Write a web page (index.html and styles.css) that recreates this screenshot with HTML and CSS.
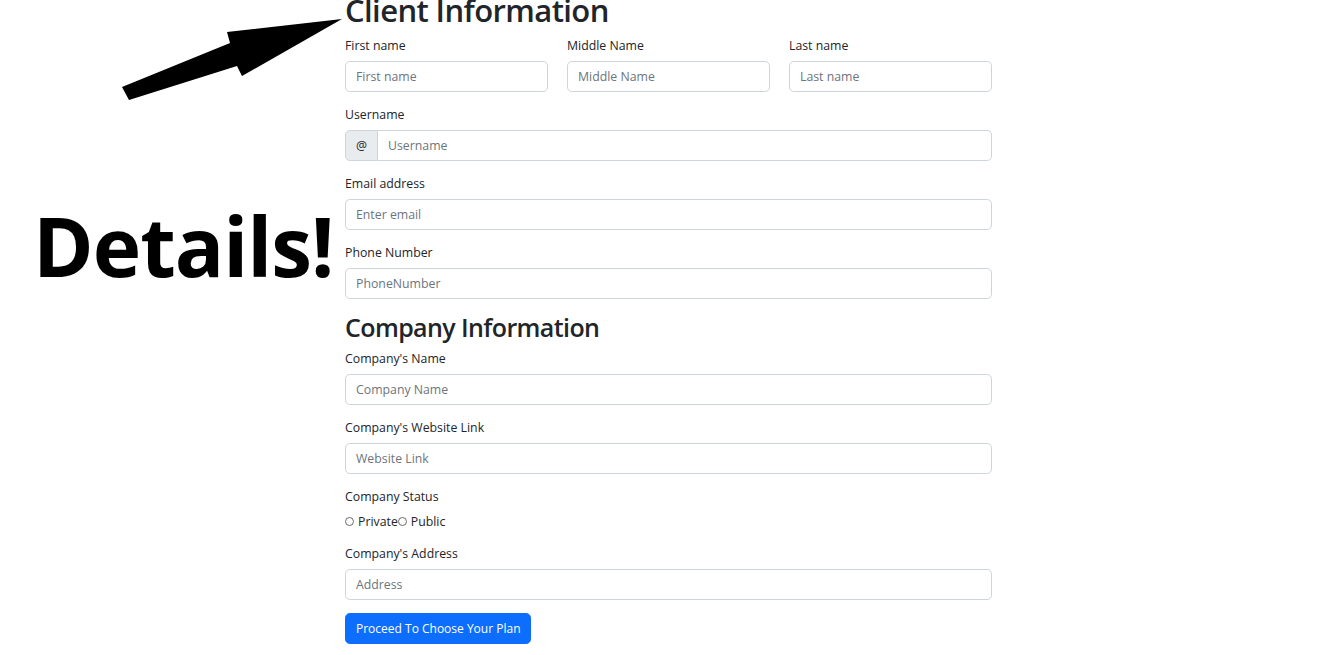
FILE: index.html
```html
<!DOCTYPE html>
<html lang="en">
<head>
<meta charset="utf-8">
<title>Client Details</title>
<link rel="stylesheet" href="styles.css">
</head>
<body>
<div class="page">
  <aside class="side">
    <svg class="arrow" width="345" height="110" viewBox="0 0 345 110" aria-hidden="true">
      <polygon points="342,19 227,32 230,43 122,87 129,100 237,66 242,76" fill="#000"/>
    </svg>
    <div class="details">Details!</div>
  </aside>
  <main class="form">
    <h1 class="title title-lg">Client Information</h1>
    <div class="row3">
      <div class="field">
        <label class="label">First name</label>
        <input class="control" type="text" placeholder="First name">
      </div>
      <div class="field">
        <label class="label">Middle Name</label>
        <input class="control" type="text" placeholder="Middle Name">
      </div>
      <div class="field">
        <label class="label">Last name</label>
        <input class="control" type="text" placeholder="Last name">
      </div>
    </div>
    <div class="field">
      <label class="label">Username</label>
      <div class="group">
        <span class="group-text">@</span>
        <input class="control group-control" type="text" placeholder="Username">
      </div>
    </div>
    <div class="field">
      <label class="label">Email address</label>
      <input class="control" type="email" placeholder="Enter email">
    </div>
    <div class="field">
      <label class="label">Phone Number</label>
      <input class="control" type="text" placeholder="PhoneNumber">
    </div>

    <h2 class="title title-md">Company Information</h2>
    <div class="field">
      <label class="label">Company's Name</label>
      <input class="control" type="text" placeholder="Company Name">
    </div>
    <div class="field">
      <label class="label">Company's Website Link</label>
      <input class="control" type="text" placeholder="Website Link">
    </div>
    <div class="field">
      <label class="label">Company Status</label>
      <div class="radios">
        <label class="radio"><input type="radio" name="status" class="radio-input">Private</label><label class="radio"><input type="radio" name="status" class="radio-input">Public</label>
      </div>
    </div>
    <div class="field">
      <label class="label">Company's Address</label>
      <input class="control" type="text" placeholder="Address">
    </div>
    <button class="btn" type="button">Proceed To Choose Your Plan</button>
  </main>
</div>
</body>
</html>
```
FILE: styles.css
```css
html, body {
  margin: 0;
  padding: 0;
  background: #fff;
}
body {
  font-family: "Open Sans", "Noto Sans", sans-serif;
  font-size: 12.3px;
  color: #212529;
  overflow: hidden;
}
.page {
  display: flex;
  align-items: flex-start;
}
.side {
  position: relative;
  width: 345px;
  flex: none;
  height: 655px;
}
.arrow {
  position: absolute;
  left: 0;
  top: 0;
}
.details {
  position: absolute;
  left: 33px;
  top: 196px;
  font-family: "Open Sans", sans-serif;
  font-weight: 700;
  font-size: 82px;
  letter-spacing: -1px;
  line-height: 1.2;
  color: #000;
}
.form {
  width: 647px;
  display: flex;
  flex-direction: column;
  margin-top: -7.8px;
}
.title {
  font-weight: 600;
  margin: 0 0 6.4px;
  color: #212529;
  letter-spacing: -0.6px;
}
.title-lg {
  font-size: 31px;
  line-height: 37.2px;
}
.title-md {
  font-size: 25px;
  line-height: 30.6px;
}
.row3 {
  display: grid;
  grid-template-columns: repeat(3, 1fr);
  column-gap: 19px;
}
.field {
  display: flex;
  flex-direction: column;
  margin-bottom: 12.4px;
}
.label {
  line-height: 19.2px;
  margin-bottom: 6.4px;
}
.control {
  box-sizing: border-box;
  height: 31px;
  width: 100%;
  border: 1px solid #ced4da;
  border-radius: 4.8px;
  padding: 0 10px;
  font-family: inherit;
  font-size: 12.3px;
  color: #212529;
  background: #fff;
  outline: none;
}
.control::placeholder {
  color: #6c757d;
}
.group {
  display: flex;
}
.group-text {
  box-sizing: border-box;
  width: 33px;
  height: 31px;
  flex: none;
  display: flex;
  align-items: center;
  justify-content: center;
  background: #e9ecef;
  border: 1px solid #ced4da;
  border-radius: 4.8px 0 0 4.8px;
  color: #212529;
}
.group-control {
  border-left: none;
  border-radius: 0 4.8px 4.8px 0;
  flex: 1;
}
.radios {
  display: flex;
  line-height: 19.2px;
}
.radio {
  display: flex;
  align-items: center;
}
.radio-input {
  appearance: none;
  -webkit-appearance: none;
  box-sizing: border-box;
  width: 9px;
  height: 9px;
  margin: 0 4px 0 0;
  border: 1px solid #6a6a6a;
  border-radius: 50%;
  background: #fff;
}
.btn {
  align-self: flex-start;
  box-sizing: border-box;
  height: 31px;
  padding: 0 10px;
  border: 1px solid #0d6efd;
  border-radius: 4.8px;
  background: #0d6efd;
  color: #fff;
  font-family: inherit;
  font-size: 12px;
  cursor: pointer;
}
```
